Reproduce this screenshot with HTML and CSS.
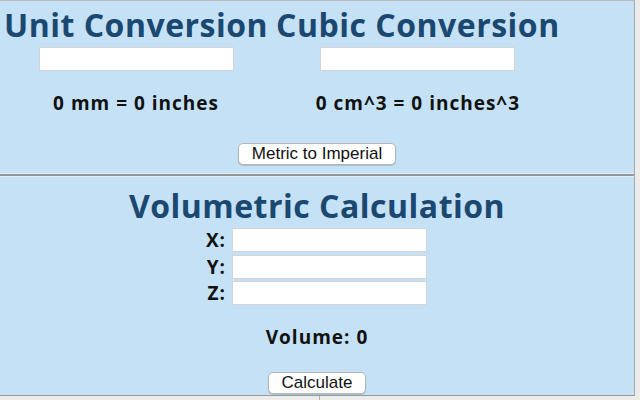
FILE: index.html
```html
<!DOCTYPE html>
<html lang="en">
<head>
    <meta charset="UTF-8">
    <meta name="viewport" content="width=device-width, initial-scale=1.0">
    <title>Unit Conversion</title>
    <link rel="stylesheet" href="styles.css">
</head>
<body>
    <div id="wrapper">
        <div class="section conversions">
            <div class="columns">
                <div class="column">
                    <h1>Unit Conversion</h1>
                    <input type="text" id="mm">
                    <p class="result">0 mm = 0 inches</p>
                </div>
                <div class="column">
                    <h1>Cubic Conversion</h1>
                    <input type="text" id="cm3">
                    <p class="result">0 cm^3 = 0 inches^3</p>
                </div>
            </div>
            <button type="button" id="toggle">Metric to Imperial</button>
        </div>

        <div class="section volumetric">
            <h1>Volumetric Calculation</h1>
            <div class="fields">
                <label for="x">X:</label><input type="text" id="x">
                <label for="y">Y:</label><input type="text" id="y">
                <label for="z">Z:</label><input type="text" id="z">
            </div>
            <p class="result volume">Volume: 0</p>
            <button type="button" id="calculate">Calculate</button>
        </div>
    </div>
    <div class="under"></div>
</body>
</html>
```

FILE: styles.css
```css
* {
    margin: 0;
    padding: 0;
    box-sizing: border-box;
}

body {
    font-family: "Open Sans", "DejaVu Sans", sans-serif;
    background: #ececec;
    color: #111;
    height: 400px;
    overflow: hidden;
}

#wrapper {
    width: 635px;
    border-top: 1px solid #b9b9b9;
    border-right: 1px solid #a9a9a9;
    border-bottom: 1px solid #9a9a9a;
    background: #c5e1f5;
}

.under {
    width: 1px;
    height: 4px;
    margin-left: 319px;
    background: #b0b0b0;
}

.section {
    display: flex;
    flex-direction: column;
    align-items: center;
}

.conversions {
    height: 173px;
    border-bottom: 1px solid #e2eff9;
}

.volumetric {
    height: 221px;
    border-top: 2px solid #959595;
    box-shadow: inset 0 1px 0 #e2eff9;
}

h1 {
    color: #1b4870;
    font-size: 32px;
    font-weight: 700;
    line-height: 36px;
    letter-spacing: 0.5px;
    white-space: nowrap;
}

.columns {
    align-self: stretch;
    display: flex;
    gap: 8px;
    padding-left: 4px;
}

.column {
    display: flex;
    flex-direction: column;
    align-items: center;
}

.conversions h1 {
    margin-top: 6px;
}

input {
    width: 195px;
    height: 24px;
    border: 1px solid #d4d4d4;
    background: #fff;
    font-size: 14px;
}

.conversions input {
    margin-top: 4px;
}

.result {
    font-size: 19px;
    font-weight: 700;
    line-height: 24px;
    letter-spacing: 1px;
    white-space: nowrap;
}

.conversions .result {
    margin-top: 20px;
}

button {
    font-family: "Liberation Sans", Arial, sans-serif;
    font-size: 17px;
    color: #111;
    background: #fff;
    border: 1px solid #b4b4b4;
    border-radius: 5px;
    height: 22px;
    padding: 0 13px;
    box-shadow: 0 1px 1px rgba(0,0,0,0.15);
}

#toggle {
    margin-top: 28px;
}

.volumetric h1 {
    margin-top: 12px;
}

.fields {
    display: grid;
    grid-template-columns: 40px 195px;
    column-gap: 6px;
    row-gap: 2.5px;
    align-items: center;
    margin-top: 4px;
    margin-left: -21px;
}

.fields label {
    font-size: 19px;
    font-weight: 700;
    letter-spacing: 1px;
    line-height: 24px;
    text-align: right;
}

.volume {
    margin-top: 20px;
}

#calculate {
    margin-top: 23px;
}
```
